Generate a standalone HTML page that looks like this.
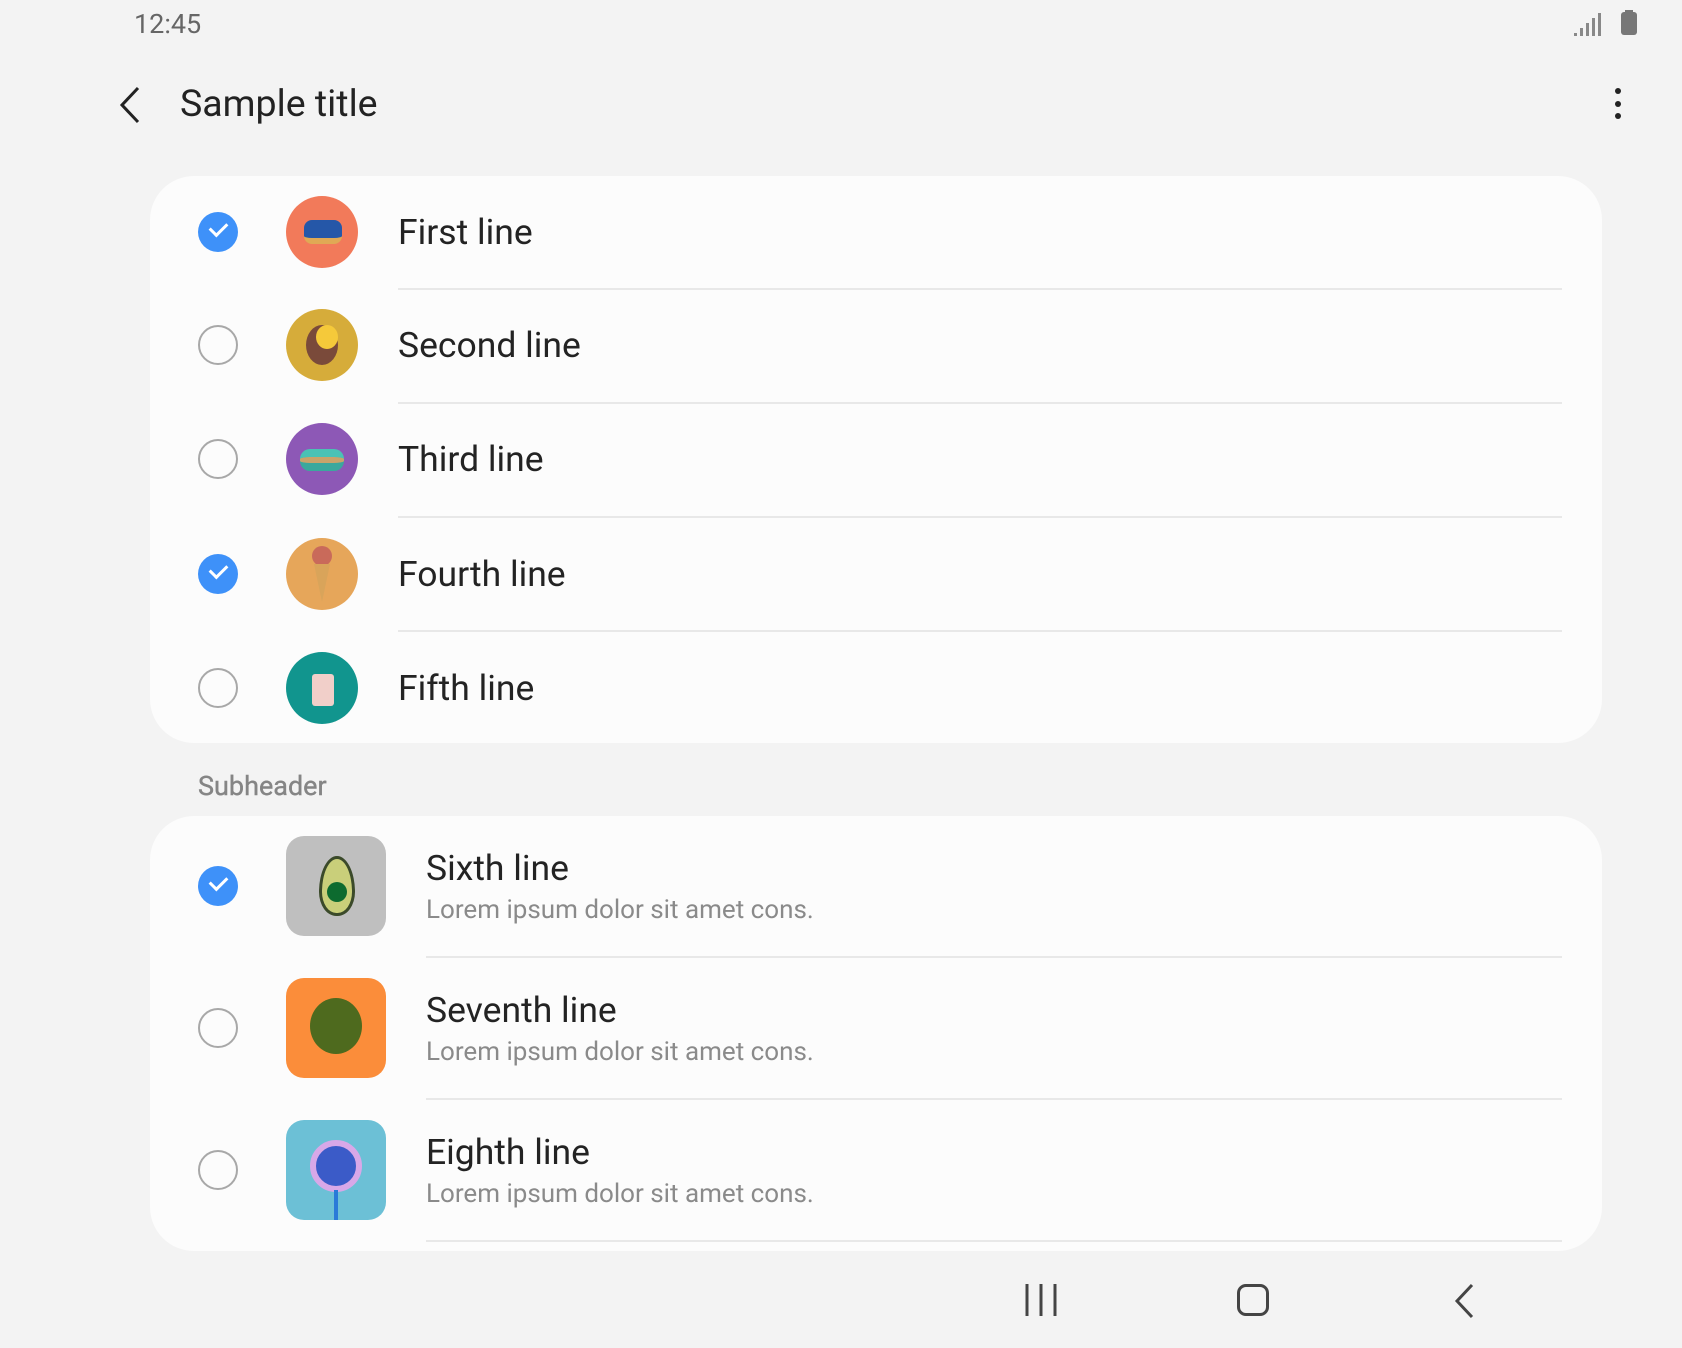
<!DOCTYPE html>
<html><head><meta charset="utf-8"><style>
*{margin:0;padding:0;box-sizing:border-box}
body{width:1682px;height:1348px;background:#f3f3f3;font-family:"Roboto","Liberation Sans",sans-serif;position:relative;overflow:hidden;color:#222}
.a{position:absolute}
.card{position:absolute;left:150px;width:1452px;background:#fcfcfc;border-radius:44px}
.chk{position:absolute;left:198px;width:40px;height:40px;border-radius:50%;margin-top:-20px}
.off{border:2.5px solid #a8a8a8}
.on{background:#3e91f9}
.on:after{content:"";position:absolute;left:12px;top:10px;width:14px;height:8px;border-left:3.5px solid #fff;border-bottom:3.5px solid #fff;transform:rotate(-45deg)}
.av{position:absolute;left:286px;width:72px;height:72px;border-radius:50%;margin-top:-36px;overflow:hidden}
.t{position:absolute;font-size:35.5px;line-height:40px;margin-top:-20px;color:#232323}
.div{position:absolute;height:2px;background:#e8e8e8;right:120px}
.sq{position:absolute;left:286px;width:100px;height:100px;border-radius:18px;margin-top:-50px;overflow:hidden}
.sub{position:absolute;left:426px;font-size:26px;color:#8a8a8a}
</style></head><body>
<div class="a" style="left:134px;top:8px;font-size:27px;color:#666">12:45</div>
<svg class="a" style="left:1573px;top:12px" width="28" height="24"><g fill="#888"><rect x="1" y="21" width="3" height="3"/><rect x="7" y="16" width="3" height="8"/><rect x="13" y="11" width="3" height="13"/><rect x="19" y="6" width="3" height="18"/><rect x="25" y="1" width="3" height="23"/></g></svg>
<div class="a" style="left:1621px;top:12px;width:16px;height:23px;background:#777;border-radius:3px"></div>
<div class="a" style="left:1625px;top:10px;width:8px;height:3px;background:#777"></div>
<svg class="a" style="left:118px;top:85px" width="26" height="40"><path d="M20 3 L4 20 L20 37" stroke="#222" stroke-width="3" fill="none"/></svg>
<div class="a" style="left:180px;top:82px;font-size:37.5px;color:#222">Sample title</div>
<div class="a" style="left:1615px;top:88px;width:6px;height:6px;border-radius:50%;background:#222;box-shadow:0 13px 0 #222,0 25px 0 #222"></div>

<div class="card" style="top:176px;height:567px"></div>
<div class="chk on" style="top:232px"></div>
<div class="chk off" style="top:345px"></div>
<div class="chk off" style="top:459px"></div>
<div class="chk on" style="top:574px"></div>
<div class="chk off" style="top:688px"></div>

<div class="av" style="top:232px;background:#f27a5a"><div class="a" style="left:18px;top:24px;width:38px;height:24px;background:#2557a8;border-radius:8px;border-bottom:6px solid #e0a955"></div></div>
<div class="av" style="top:345px;background:#d6ac3a"><div class="a" style="left:20px;top:16px;width:32px;height:40px;background:#7a4a3a;border-radius:50%"></div><div class="a" style="left:30px;top:16px;width:22px;height:24px;background:#f5c93a;border-radius:50%"></div></div>
<div class="av" style="top:459px;background:#8d58b6"><div class="a" style="left:14px;top:26px;width:44px;height:22px;background:#3fb3a8;border-radius:10px;border-top:8px solid #4ac2b5;border-bottom:8px solid #3aa89d;box-shadow:inset 0 0 0 3px #c9a36a"></div></div>
<div class="av" style="top:574px;background:#e6a65a"><div class="a" style="left:26px;top:8px;width:20px;height:20px;border-radius:50%;background:#c96a5a"></div><div class="a" style="left:28px;top:26px;width:0;height:0;border-left:8px solid transparent;border-right:8px solid transparent;border-top:38px solid #d9a45a"></div></div>
<div class="av" style="top:688px;background:#11958e"><div class="a" style="left:26px;top:22px;width:22px;height:32px;background:#f1cfc9;border-radius:3px"></div></div>

<div class="t" style="left:398px;top:232px">First line</div>
<div class="t" style="left:398px;top:345px">Second line</div>
<div class="t" style="left:398px;top:459px">Third line</div>
<div class="t" style="left:398px;top:574px">Fourth line</div>
<div class="t" style="left:398px;top:688px">Fifth line</div>
<div class="div" style="left:398px;top:288px"></div>
<div class="div" style="left:398px;top:402px"></div>
<div class="div" style="left:398px;top:516px"></div>
<div class="div" style="left:398px;top:630px"></div>

<div class="a" style="left:198px;top:770px;font-size:27px;color:#858585;-webkit-text-stroke:0.4px #858585">Subheader</div>

<div class="card" style="top:816px;height:435px"></div>
<div class="chk on" style="top:886px"></div>
<div class="chk off" style="top:1028px"></div>
<div class="chk off" style="top:1170px"></div>
<div class="sq" style="top:886px;background:#bfbfbf"><div class="a" style="left:33px;top:20px;width:36px;height:60px;background:#c9cf7a;border-radius:50% 50% 48% 48%/60% 60% 40% 40%;border:3px solid #3b4a2a"></div><div class="a" style="left:41px;top:46px;width:20px;height:20px;border-radius:50%;background:#0d6b2f"></div></div>
<div class="sq" style="top:1028px;background:#fb8d3a"><div class="a" style="left:24px;top:20px;width:52px;height:56px;border-radius:50%;background:#4e6a1e"></div></div>
<div class="sq" style="top:1170px;background:#6cc0d6"><div class="a" style="left:24px;top:20px;width:52px;height:52px;border-radius:50%;background:#3b5bc8;border:6px solid #d8a8e8"></div><div class="a" style="left:48px;top:70px;width:4px;height:30px;background:#2a7ad8"></div></div>

<div class="t" style="left:426px;top:868px">Sixth line</div>
<div class="sub" style="top:895px">Lorem ipsum dolor sit amet cons.</div>
<div class="t" style="left:426px;top:1010px">Seventh line</div>
<div class="sub" style="top:1037px">Lorem ipsum dolor sit amet cons.</div>
<div class="t" style="left:426px;top:1152px">Eighth line</div>
<div class="sub" style="top:1179px">Lorem ipsum dolor sit amet cons.</div>
<div class="div" style="left:426px;top:956px"></div>
<div class="div" style="left:426px;top:1098px"></div>
<div class="div" style="left:426px;top:1240px"></div>

<svg class="a" style="left:1022px;top:1282px" width="40" height="36"><g stroke="#444" stroke-width="3"><line x1="5" y1="2" x2="5" y2="34"/><line x1="19" y1="2" x2="19" y2="34"/><line x1="33" y1="2" x2="33" y2="34"/></g></svg>
<div class="a" style="left:1237px;top:1284px;width:32px;height:32px;border:3px solid #444;border-radius:9px"></div>
<svg class="a" style="left:1452px;top:1282px" width="26" height="38"><path d="M20 3 L5 19 L20 35" stroke="#444" stroke-width="3" fill="none"/></svg>
</body></html>
